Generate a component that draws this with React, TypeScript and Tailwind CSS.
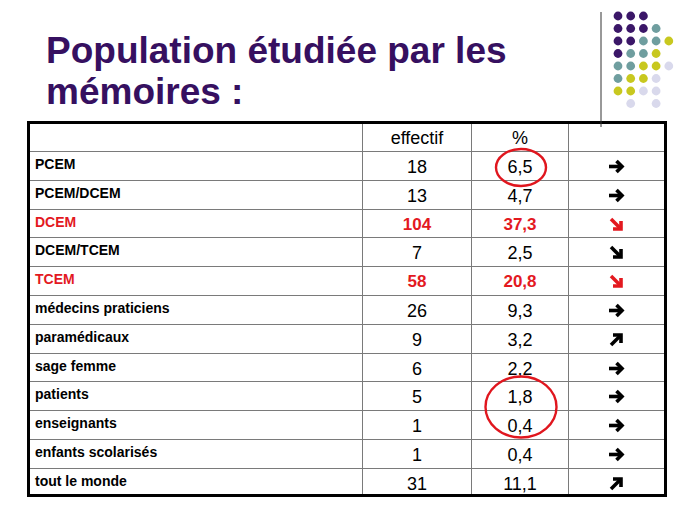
import React from 'react';

type Arrow = 'right' | 'down' | 'up';

interface Row {
  label: string;
  effectif: string;
  pct: string;
  arrow: Arrow;
  red?: boolean;
}

const rows: Row[] = [
  { label: 'PCEM', effectif: '18', pct: '6,5', arrow: 'right' },
  { label: 'PCEM/DCEM', effectif: '13', pct: '4,7', arrow: 'right' },
  { label: 'DCEM', effectif: '104', pct: '37,3', arrow: 'down', red: true },
  { label: 'DCEM/TCEM', effectif: '7', pct: '2,5', arrow: 'down' },
  { label: 'TCEM', effectif: '58', pct: '20,8', arrow: 'down', red: true },
  { label: 'médecins praticiens', effectif: '26', pct: '9,3', arrow: 'right' },
  { label: 'paramédicaux', effectif: '9', pct: '3,2', arrow: 'up' },
  { label: 'sage femme', effectif: '6', pct: '2,2', arrow: 'right' },
  { label: 'patients', effectif: '5', pct: '1,8', arrow: 'right' },
  { label: 'enseignants', effectif: '1', pct: '0,4', arrow: 'right' },
  { label: 'enfants scolarisés', effectif: '1', pct: '0,4', arrow: 'right' },
  { label: 'tout le monde', effectif: '31', pct: '11,1', arrow: 'up' },
];

// P = violet, T = bleu-vert, Y = jaune, L = lavande
const dotGrid = ['PPP..', 'PPPT.', 'PPTTY', 'PTTY.', 'TTYYL', 'TYYL.', 'YYLL.', '.L.L.'];
const dotColors: Record<string, string> = {
  P: '#3b1768',
  T: '#6f9e9f',
  Y: '#c8c81f',
  L: '#d9d9ec',
};

const ArrowIcon = ({ dir, color }: { dir: Arrow; color: string }) => {
  if (dir === 'right') {
    return (
      <svg width="17" height="15" viewBox="0 0 17 15" fill="none" stroke={color} strokeWidth="3.6">
        <path d="M1 7.5 H14" />
        <path d="M8.5 2 L14 7.5 L8.5 13" strokeLinejoin="miter" />
      </svg>
    );
  }
  if (dir === 'down') {
    return (
      <svg width="15" height="15" viewBox="0 0 15 15" fill="none" stroke={color} strokeWidth="3.6">
        <path d="M2 2 L12 12" />
        <path d="M4 12 H12 V4" strokeLinejoin="miter" />
      </svg>
    );
  }
  return (
    <svg width="15" height="15" viewBox="0 0 15 15" fill="none" stroke={color} strokeWidth="3.6">
      <path d="M2 13 L12 3" />
      <path d="M4 3 H12 V11" strokeLinejoin="miter" />
    </svg>
  );
};

export default function App() {
  return (
    <div className="relative w-[689px] h-[517px] bg-white overflow-hidden font-['Liberation_Sans',Arial,sans-serif]">
      {/* en-tête : titre + pastilles */}
      <div className="flex items-start h-[121px]">
        <h1 className="pl-[46px] pt-[30px] text-[37px] leading-[41px] font-bold text-[#361060]">
          Population étudiée par les
          <br />
          mémoires :
        </h1>
        <svg className="ml-auto mr-[13px] mt-[10px]" width="64" height="100" viewBox="0 0 64 100">
          {dotGrid.map((line, j) =>
            line.split('').map((c, i) =>
              c === '.' ? null : (
                <circle key={`${i}-${j}`} cx={6 + i * 12.7} cy={6 + j * 12.5} r="4.4" fill={dotColors[c]} />
              )
            )
          )}
        </svg>
      </div>

      {/* tableau */}
      <div className="ml-[27px] w-[640px] h-[376px] border-[3px] border-black grid grid-cols-[333px_109px_97px_1fr] grid-rows-[28px_repeat(11,28.8px)_1fr] text-black">
        <div className="border-r border-b border-[#7a7a7a]" />
        <div className="border-r border-b border-[#7a7a7a] pt-[4px] text-center text-[18px] leading-5">effectif</div>
        <div className="border-r border-b border-[#7a7a7a] pt-[4px] text-center text-[18px] leading-5">%</div>
        <div className="border-b border-[#7a7a7a]" />

        {rows.map((r, idx) => {
          const last = idx === rows.length - 1;
          const color = r.red ? 'text-[#e3191f]' : 'text-black';
          const b = last ? '' : 'border-b';
          return (
            <React.Fragment key={r.label}>
              <div className={`${b} border-r border-[#7a7a7a] pl-[5px] pt-[4px] text-[14px] leading-4 font-bold ${color}`}>
                {r.label}
              </div>
              <div
                className={`${b} border-r border-[#7a7a7a] pt-[5px] text-center leading-5 ${
                  r.red ? 'text-[17px] font-bold' : 'text-[18px]'
                } ${color}`}
              >
                {r.effectif}
              </div>
              <div
                className={`${b} border-r border-[#7a7a7a] pt-[5px] text-center leading-5 ${
                  r.red ? 'text-[17px] font-bold' : 'text-[18px]'
                } ${color}`}
              >
                {r.pct}
              </div>
              <div className={`${b} border-[#7a7a7a] pt-[7px] flex justify-center items-start`}>
                <ArrowIcon dir={r.arrow} color={r.red ? '#e3191f' : '#000000'} />
              </div>
            </React.Fragment>
          );
        })}
      </div>

      {/* trait vertical et cercles rouges par-dessus */}
      <svg className="absolute inset-0 pointer-events-none" width="689" height="517" viewBox="0 0 689 517">
        <line x1="601" y1="12" x2="601" y2="127" stroke="#333333" strokeWidth="1" />
        <ellipse cx="521" cy="167.5" rx="25" ry="18.5" fill="none" stroke="#e0161e" strokeWidth="2.4" />
        <ellipse cx="521" cy="407" rx="35.5" ry="30.5" fill="none" stroke="#e0161e" strokeWidth="2.4" />
      </svg>
    </div>
  );
}
